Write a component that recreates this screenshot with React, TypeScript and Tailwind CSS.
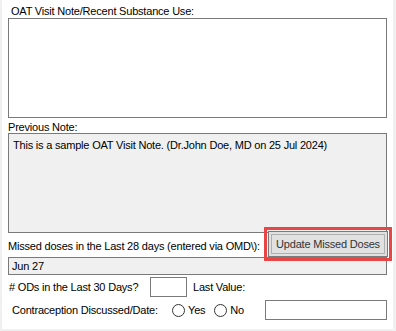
import React from "react"

const font = { fontFamily: '"Liberation Sans", Arial, sans-serif' }

function Radio({ label }: { label: string }) {
  return (
    <label className="flex items-center gap-[3px]">
      <span className="inline-block w-[13px] h-[13px] rounded-full border border-[#333] bg-white" />
      <span>{label}</span>
    </label>
  )
}

export default function App() {
  return (
    <div
      className="w-[396px] h-[331px] bg-[#f0f0f0] pl-[2px] pr-[3px] pb-[2px] text-[11px] tracking-[-0.2px] text-black leading-[14px]"
      style={font}
    >
      <div className="h-full bg-white flex flex-col pl-[6px] pr-[6px]">
        <div className="pt-[4px] pl-[3px] h-[18px]">OAT Visit Note/Recent Substance Use:</div>
        <div className="h-[100px] border border-[#7a7a7a] bg-white" />

        <div className="pt-[2px] h-[15px]">Previous Note:</div>
        <div className="h-[100px] border border-[#7a7a7a] bg-[#f0f0f0] px-[4px] pt-[4px]">
          This is a sample OAT Visit Note. (Dr.John Doe, MD on 25 Jul 2024)
        </div>

        <div className="flex items-end justify-between h-[25px] -mt-[1px]">
          <span className="pb-[4px] whitespace-nowrap">Missed doses in the Last 28 days (entered via OMD\):</span>
          <div className="relative shrink-0 mr-[-1px]">
            <button className="relative h-[26px] w-[120px] bg-[#e1e1e1] border border-[#7a7a7a] text-[#333] flex items-center justify-center whitespace-nowrap">
              <span className="border border-[#b0b0b0] absolute inset-[2px]" />
              Update Missed Doses
            </button>
            <span className="absolute -left-[4px] -top-[4px] -right-[4px] -bottom-[4px] border-[3px] border-[#e84545]" />
          </div>
        </div>

        <div className="h-[18px] border border-[#7a7a7a] bg-[#f0f0f0] px-[3px] flex items-center">Jun 27</div>

        <div className="flex items-center mt-[2px] h-[20px]">
          <span className="pl-[1px] w-[142px] shrink-0 whitespace-nowrap">&#35; ODs in the Last 30 Days?</span>
          <span className="w-[37px] h-[20px] shrink-0 border border-[#7a7a7a] bg-white" />
          <span className="ml-[6px] whitespace-nowrap">Last Value:</span>
        </div>

        <div className="flex items-center mt-[3px] h-[20px]">
          <span className="pl-[4px] w-[164px] shrink-0 whitespace-nowrap">Contraception Discussed/Date:</span>
          <div className="flex items-center gap-[9px]">
            <Radio label="Yes" />
            <Radio label="No" />
          </div>
          <span className="ml-auto w-[122px] h-[20px] shrink-0 border border-[#7a7a7a] bg-white" />
        </div>
      </div>
    </div>
  )
}
